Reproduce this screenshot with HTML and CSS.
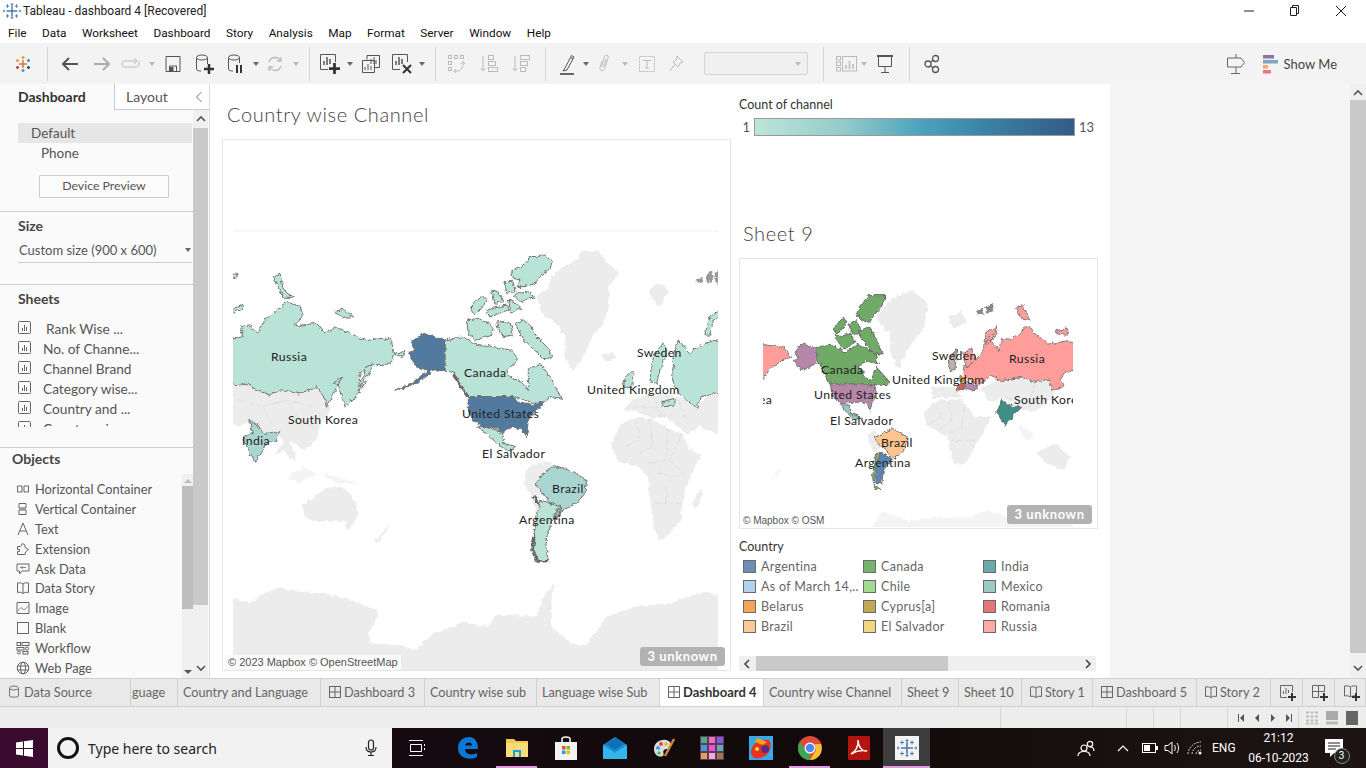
FILE: index.html
```html
<!DOCTYPE html>
<html lang="en">
<head>
  <meta charset="UTF-8" />
  <title>Tableau - dashboard 4 [Recovered]</title>
  <link rel="stylesheet" href="styles.css">
</head>
<body>
  <svg class="defs" width="0" height="0">
    <filter id="rough" x="-5%" y="-5%" width="110%" height="110%" color-interpolation-filters="sRGB"><feTurbulence type="fractalNoise" baseFrequency=".07" numOctaves="3" seed="4"/><feDisplacementMap in="SourceGraphic" scale="15" xChannelSelector="R" yChannelSelector="G"/></filter>
    <symbol id="i-sheet" viewBox="0 0 14 14"><rect x="0.5" y="0.5" width="12" height="12" rx="1" fill="none" stroke="#666"/><path d="M4.5 10V7M6.5 10V4M8.5 10V6" stroke="#666" fill="none"/></symbol>
    <symbol id="i-dash" viewBox="0 0 14 14"><rect x="1.5" y="1.5" width="11" height="11" fill="none" stroke="#666"/><path d="M7 1.5V12.5M1.5 7H12.5" stroke="#666" fill="none"/></symbol>
    <symbol id="i-story" viewBox="0 0 14 14"><path d="M7 3C5.5 1.8 3.5 1.6 1.5 2V11.5C3.5 11 5.5 11.3 7 12.5 8.5 11.3 10.5 11 12.5 11.5V2C10.5 1.6 8.5 1.8 7 3ZM7 3V12.5" fill="none" stroke="#666"/></symbol>
    <symbol id="i-tab" viewBox="0 0 20 20"><g fill="none" stroke="#4a7bb0"><path d="M10 4V16M4 10H16" stroke-width="1.6"/><path d="M5 2.500V6.500M3 4.500H7M15 2.500V6.500M13 4.500H17M5 13.500V17.500M3 15.500H7M15 13.500V17.500M13 15.500H17M10 1V4M8.500 2.500H11.500M10 16V19M8.500 17.500H11.500M1 8.500V11.500M-.5 10H2.500M19 8.500V11.500M17.500 10H20.500"/></g></symbol>
    <symbol id="i-plus" viewBox="0 0 8 8"><path d="M4 0V8M0 4H8" stroke="#333" stroke-width="2"/></symbol>
  </svg>

  <header class="titlebar">
    <svg class="app-logo" width="18" height="18"><use href="#i-tab"/></svg>
    <span class="app-title">Tableau - dashboard 4 [Recovered]</span>
    <div class="winbtns">
      <svg width="12" height="12" viewBox="0 0 12 12"><path d="M1 6H11" stroke="#222"/></svg>
      <svg width="12" height="12" viewBox="0 0 12 12"><path d="M3.500 2.500V.5H9.500V8.500H7.500M1.500 2.500H7.500V10.500H1.500Z" fill="none" stroke="#222"/></svg>
      <svg width="12" height="12" viewBox="0 0 12 12"><path d="M1 1L11 11M11 1L1 11" stroke="#222"/></svg>
    </div>
  </header>

  <nav class="menubar">
    <span>File</span><span>Data</span><span>Worksheet</span><span>Dashboard</span><span>Story</span><span>Analysis</span><span>Map</span><span>Format</span><span>Server</span><span>Window</span><span>Help</span>
  </nav>

  <div class="toolbar">
    <div class="tool t30"><svg width="18" height="18" viewBox="0 0 18 18"><g stroke-width="1.500" fill="none"><path d="M9 5V13M5 9H13" stroke="#d9793a"/><path d="M9 1V4M7.500 2.500H10.500" stroke="#e3a13a"/><path d="M9 14V17M7.500 15.500H10.500" stroke="#5b8fb0"/><path d="M3.500 4V7M2 5.500H5" stroke="#e8a04a"/><path d="M14.500 4V7M13 5.500H16" stroke="#66889e"/><path d="M3.500 11V14M2 12.500H5" stroke="#c73a45"/><path d="M14.500 11V14M13 12.500H16" stroke="#1f4f80"/></g></svg></div>
    <i class="sep first"></i>
    <div class="tool t32"><svg width="20" height="18" viewBox="0 0 20 18"><path d="M18 9H3M9 3L3 9L9 15" fill="none" stroke="#555" stroke-width="2"/></svg></div>
    <div class="tool t32 off"><svg width="20" height="18" viewBox="0 0 20 18"><path d="M2 9H17M11 3L17 9L11 15" fill="none" stroke="#aaa" stroke-width="2"/></svg></div>
    <div class="tool t26 off"><svg width="20" height="16" viewBox="0 0 20 16"><path d="M15 5H4C2 5 1 6.500 1 8S2 11 4 11H15C17 11 18 9.500 18 8V5M13 2L16 5L13 8" fill="none" stroke="#bbb"/></svg></div>
    <b class="caret w16 dim"></b>
    <div class="tool t26"><svg width="16" height="18" viewBox="0 0 16 18"><path d="M1 1.500H15V16.500H1ZM4.500 16.500V11H11.500V16.500" fill="none" stroke="#555"/><rect x="4.500" y="12" width="4" height="4" fill="#555"/></svg></div>
    <div class="tool t38"><svg width="20" height="22" viewBox="0 0 20 22"><ellipse cx="7" cy="4.500" rx="5.500" ry="2.500" fill="none" stroke="#555"/><path d="M1.500 4.500V16C1.500 17.500 3.500 18 6 18M12.500 4.500V11" fill="none" stroke="#555"/><use href="#i-plus" x="9" y="11" width="10" height="10"/></svg></div>
    <div class="tool t24"><svg width="18" height="22" viewBox="0 0 18 22"><ellipse cx="7" cy="4.500" rx="5.500" ry="2.500" fill="none" stroke="#555"/><path d="M1.500 4.500V16C1.500 17.500 3.500 18 6 18M12.500 4.500V10" fill="none" stroke="#555"/><path d="M10 12V20M14 12V20" stroke="#333" stroke-width="2"/></svg></div>
    <b class="caret w16"></b>
    <div class="tool t22 off"><svg width="18" height="18" viewBox="0 0 18 18"><path d="M3 7C4 4 6.500 2.500 9 2.500 11.500 2.500 13.500 3.500 15 6M15 11C14 14 11.500 15.500 9 15.500 6.500 15.500 4.500 14.500 3 12M15 2V6H11M3 16V12H7" fill="none" stroke="#bbb" stroke-width="1.300"/></svg></div>
    <b class="caret w20 dim"></b>
    <i class="sep s2"></i>
    <div class="tool t30"><svg width="22" height="22" viewBox="0 0 22 22"><path d="M9 16.500H1.500V1.500H16.500V9" fill="none" stroke="#555"/><path d="M5 12V8M8 12V4M11 11V6" stroke="#555" stroke-width="1.500"/><use href="#i-plus" x="10" y="10" width="11" height="11"/></svg></div>
    <b class="caret w10"></b>
    <div class="tool t32"><svg width="20" height="20" viewBox="0 0 20 20"><path d="M6 5.500V1.500H18.500V13.500H14" fill="none" stroke="#555"/><path d="M1.500 6.500H13.500V18.500H1.500Z" fill="#f3f3f3" stroke="#555"/><path d="M4 16V13M7 16V10M10 16V12M10 10V5M13 10V3M15 10V6" stroke="#555"/></svg></div>
    <div class="tool t30"><svg width="22" height="22" viewBox="0 0 22 22"><path d="M9 16.500H1.500V1.500H16.500V9" fill="none" stroke="#555"/><path d="M5 12V8M8 12V4M11 11V6" stroke="#555" stroke-width="1.500"/><path d="M12 12L20 20M20 12L12 20" stroke="#333" stroke-width="2"/></svg></div>
    <b class="caret w10"></b>
    <i class="sep s3"></i>
    <div class="tool t32 off"><svg width="20" height="20" viewBox="0 0 20 20"><g fill="none" stroke="#bbb"><rect x="1.500" y="1.500" width="3" height="3"/><rect x="7.500" y="1.500" width="3" height="3"/><rect x="13.500" y="1.500" width="3" height="3"/><rect x="1.500" y="7.500" width="3" height="3"/><rect x="1.500" y="13.500" width="3" height="3"/><path d="M7 17C12 18 17 15 16 8M14 10L16 7.500 18 10M7 17L9 15M7 17L9 19"/></g></svg></div>
    <div class="tool t32 off"><svg width="20" height="20" viewBox="0 0 20 20"><g fill="none" stroke="#bbb"><path d="M4 2V17M1.500 14L4 17 6.500 14"/><rect x="9.500" y="1.500" width="5" height="4"/><rect x="9.500" y="7.500" width="7" height="4"/><rect x="9.500" y="13.500" width="9" height="4"/></g></svg></div>
    <div class="tool t32 off"><svg width="20" height="20" viewBox="0 0 20 20"><g fill="none" stroke="#bbb"><path d="M4 2V17M1.500 14L4 17 6.500 14"/><rect x="9.500" y="1.500" width="9" height="4"/><rect x="9.500" y="7.500" width="7" height="4"/><rect x="9.500" y="13.500" width="5" height="4"/></g></svg></div>
    <i class="sep s3"></i>
    <div class="tool t28"><svg width="18" height="24" viewBox="0 0 18 24"><path d="M6 16L4 19 8 18 15 5 12.500 3.500ZM11.500 5.500L14 7" fill="none" stroke="#555"/><path d="M1 22H15" stroke="#444" stroke-width="1.600"/></svg></div>
    <b class="caret w8"></b>
    <div class="tool t30 off"><svg width="16" height="22" viewBox="0 0 16 22"><path d="M5 8L3 15C2.500 18 6.500 19 7.500 16L11 5C12 2 8.500 1 7.500 3.500L5 12C4.500 13.500 6.500 14 7 12.500L9 6" fill="none" stroke="#bbb"/></svg></div>
    <b class="caret w10 dim"></b>
    <div class="tool t34 off"><svg width="18" height="18" viewBox="0 0 18 18"><rect x="1.500" y="1.500" width="15" height="15" fill="none" stroke="#bbb" stroke-dasharray="2 1"/><path d="M5 5.500H13M9 5.500V13M7 13H11" fill="none" stroke="#bbb"/></svg></div>
    <div class="tool t26 off"><svg width="18" height="20" viewBox="0 0 18 20"><path d="M9 2L15 8 12 9 10 13 5 8 8.500 6ZM6.500 10.500L2 17" fill="none" stroke="#bbb"/></svg></div>
    <div class="fit-select"><b class="caret dim"></b></div>
    <i class="sep s4"></i>
    <div class="tool t28 off"><svg width="22" height="18" viewBox="0 0 22 18"><g fill="none" stroke="#bbb"><rect x=".5" y="1.500" width="4" height="3.500"/><rect x=".5" y="7" width="4" height="3.500"/><rect x=".5" y="12.500" width="4" height="3.500"/><rect x="6.500" y="1.500" width="14" height="14.500"/></g><path d="M10 14V10M13.500 14V6M17 14V9" stroke="#bbb" stroke-width="1.500"/></svg></div>
    <b class="caret w6 dim"></b>
    <div class="tool t36"><svg width="18" height="20" viewBox="0 0 18 20"><path d="M1 2H17" stroke="#555" stroke-width="2"/><path d="M2.500 3V12.500H15.500V3M9 12.500V18M5 18.500H13" fill="none" stroke="#555"/></svg></div>
    <i class="sep s5"></i>
    <div class="tool t44"><svg width="16" height="20" viewBox="0 0 16 20"><g fill="none" stroke="#555" stroke-width="1.300"><circle cx="11.500" cy="4.500" r="3"/><circle cx="4" cy="10" r="3"/><circle cx="11.500" cy="15.500" r="3"/><path d="M9 6.300L6.500 8.200M6.500 11.800L9 13.700"/></g></svg></div>
    <div class="tool-right">
      <svg width="20" height="22" viewBox="0 0 20 22"><path d="M10 1V5M10 14V20M5 20.500H14M1.500 5H15L18.500 9.500 15 14H1.500Z" fill="none" stroke="#666"/></svg>
      <div class="show-me">
        <svg width="16" height="20" viewBox="0 0 16 20"><rect y="1" width="11" height="3.500" fill="#8a74a0"/><rect y="6" width="15" height="3.500" fill="#7fa3c9"/><rect y="11" width="5" height="3.500" fill="#f2a868"/><rect y="16" width="8" height="3.500" fill="#ef7480"/></svg>
        <span>Show Me</span>
      </div>
    </div>
  </div>

  <main class="workspace">
    <aside class="sidebar">
      <div class="side-tabs">
        <div class="side-tab active">Dashboard</div>
        <div class="side-tab">Layout<svg class="collapse" width="8" height="12" viewBox="0 0 8 12"><path d="M6.500 1L1.500 6 6.500 11" fill="none" stroke="#777"/></svg></div>
      </div>
      <div class="side-body">
        <div class="side-content">
          <section class="sec device">
            <div class="dev-row selected">Default</div>
            <div class="dev-row phone">Phone</div>
            <div class="dev-btn">Device Preview</div>
          </section>
          <section class="sec size">
            <h3>Size</h3>
            <div class="size-select">Custom size (900 x 600)<b class="caret dark"></b></div>
          </section>
          <section class="sec sheets">
            <h3>Sheets</h3>
            <ul class="sheet-list">
              <li><svg width="14" height="14"><use href="#i-sheet"/></svg><span class="rank">Rank Wise ...</span></li>
              <li><svg width="14" height="14"><use href="#i-sheet"/></svg><span>No. of Channe...</span></li>
              <li><svg width="14" height="14"><use href="#i-sheet"/></svg><span>Channel Brand</span></li>
              <li><svg width="14" height="14"><use href="#i-sheet"/></svg><span>Category wise...</span></li>
              <li><svg width="14" height="14"><use href="#i-sheet"/></svg><span>Country and ...</span></li>
              <li><svg width="14" height="14"><use href="#i-sheet"/></svg><span>Country wise ...</span></li>
            </ul>
          </section>
          <section class="objects">
            <h3>Objects</h3>
            <div class="obj-wrap">
              <ul class="obj-list">
                <li><svg width="14" height="14" viewBox="0 0 14 14"><path d="M1.500 4H6V10H1.500ZM8 4H12.500V10H8Z" fill="none" stroke="#666"/></svg>Horizontal Container</li>
                <li><svg width="14" height="14" viewBox="0 0 14 14"><path d="M3 1.500H10V6H3ZM3 8H10V12.500H3Z" fill="none" stroke="#666"/><rect x="3" y="6" width="7" height="2" fill="#999"/></svg>Vertical Container</li>
                <li><svg width="14" height="14" viewBox="0 0 14 14"><path d="M2 13L7 1 12 13M4 9H10" fill="none" stroke="#666"/></svg>Text</li>
                <li><svg width="14" height="14" viewBox="0 0 14 14"><path d="M1.500 4.500H4.500L6.500 1.500 9 3V5.500L12.500 7.500 9.500 10 9 12.500H1.500V9.500H3.500V7.500H1.500Z" fill="none" stroke="#666"/></svg>Extension</li>
                <li><svg width="14" height="14" viewBox="0 0 14 14"><path d="M1 2H13V9H6L3.500 12V9H1Z" fill="none" stroke="#666"/><path d="M4 5.500H10M6 4V7" stroke="#888"/></svg>Ask Data</li>
                <li><svg width="14" height="14"><use href="#i-story"/></svg>Data Story</li>
                <li><svg width="14" height="14" viewBox="0 0 14 14"><path d="M1 1.500H13V12.500H1Z" fill="none" stroke="#666"/><path d="M1.500 10L5 6.500 8 9 12.500 5" fill="none" stroke="#888"/></svg>Image</li>
                <li><svg width="14" height="14" viewBox="0 0 14 14"><rect x="1.500" y="1.500" width="11" height="11" fill="none" stroke="#666"/></svg>Blank</li>
                <li><svg width="14" height="14" viewBox="0 0 14 14"><g fill="none" stroke="#666"><rect x="1" y="1.500" width="3.500" height="3"/><rect x="6" y="1.500" width="7" height="3"/><rect x="1" y="6.500" width="7" height="2.500"/><circle cx="11" cy="7.500" r="1.500"/><circle cx="3" cy="11.500" r="1.500"/><rect x="7" y="10.500" width="5" height="2.500"/></g></svg>Workflow</li>
                <li><svg width="14" height="14" viewBox="0 0 14 14"><g fill="none" stroke="#666"><circle cx="7" cy="7" r="5.800"/><ellipse cx="7" cy="7" rx="2.500" ry="5.800"/><path d="M1.500 5H12.500M1.500 9H12.500"/></g></svg>Web Page</li>
              </ul>
              <div class="obj-scroll"><b class="arr up"></b><div class="obj-thumb"></div><b class="arr down"></b></div>
            </div>
          </section>
        </div>
        <div class="vscroll side-scroll">
          <svg width="10" height="8" viewBox="0 0 10 8"><path d="M1 6L5 2 9 6" fill="none" stroke="#555" stroke-width="1.600"/></svg>
          <div class="vthumb side-thumb"></div>
          <svg class="to-end" width="10" height="8" viewBox="0 0 10 8"><path d="M1 2L5 6 9 2" fill="none" stroke="#555" stroke-width="1.600"/></svg>
        </div>
      </div>
    </aside>

    <div class="canvas">
      <div class="dashboard">
        <div class="col-left">
          <h2 class="sheet-title">Country wise Channel</h2>
          <div class="map-frame map-big">
            <svg class="map" width="507" height="530" viewBox="223 140 507 530">
              <defs><clipPath id="clip-big"><rect x="233" y="232" width="485" height="438"/></clipPath></defs>
              <path class="grid-line" d="M233 231H718"/>
              <g clip-path="url(#clip-big)">
                <g transform="translate(220 220) scale(.3333)">
                  <g filter="url(#rough)">
                  <g class="land">
                    <path d="M950 232L985 205 1000 165 1040 135 1070 125 1085 95 1130 92 1165 135 1195 160 1165 200 1165 260 1150 310 1120 345 1095 395 1060 450 1035 410 1035 345 1000 300 975 290Z"/>
                    <path d="M1290 205L1320 190 1345 210 1320 260 1295 230Z"/>
                    <path d="M1150 405L1180 398 1188 412 1160 422Z"/>
                    <path d="M1210 570L1240 540 1300 520 1370 530 1410 545 1435 565 1460 530 1510 520 1510 650 1440 620 1400 640 1340 590 1290 590 1250 570Z"/>
                    <path d="M1175 670L1205 610 1250 595 1300 600 1340 625 1385 640 1410 690 1440 705 1415 760 1395 800 1385 860 1380 900 1340 950 1315 960 1300 900 1295 850 1285 770 1250 735 1195 725Z"/>
                    <path d="M1440 810L1450 820 1425 865 1420 850Z"/>
                    <path d="M25 495L75 490 120 515 150 525 190 510 240 520 290 500 320 540 330 575 300 610 290 660 250 690 215 660 195 680 180 640 135 640 85 600 60 620 25 600Z"/>
                    <path d="M165 700L200 660 225 700 220 720 190 690Z"/>
                    <path class="faint" d="M200 770L250 740 290 760 240 790Z"/>
                    <path class="faint" d="M300 760L350 770 420 790 350 790Z"/>
                    <path d="M250 855L290 825 335 800 380 810 408 850 410 890 385 930 375 905 330 900 285 905 255 890Z"/>
                    <path d="M465 965L505 920 500 935 470 970Z"/>
                    <path d="M920 750L940 735 985 725 1000 745 960 770 945 790 960 815 965 860 955 890 935 830 915 790Z"/>
                    <path class="inner" d="M1250 600L1260 660 1210 680M1290 600L1300 680 1260 700M1340 625L1340 720 1285 730M1385 640L1350 720 1395 770M1310 760L1380 770M1300 850L1380 850M1340 850L1340 790"/>
                    <path class="inner" d="M50 540L130 560 200 540 280 560M130 560L160 620M200 540L240 600 280 620M1240 560L1300 560 1340 590M1300 530L1320 590M1370 530L1400 600"/>
                  </g>
                  <g class="teal">
                    <path d="M25 360L70 350 62 320 85 315 110 340 135 300 170 270 205 245 240 260 250 290 220 318 290 310 315 340 345 320 400 345 440 362 480 355 515 360 520 400 555 395 545 412 520 405 510 432 450 435 420 462 415 515 440 482 400 540 375 560 365 530 355 495 340 490 365 470 320 565 318 540 290 500 240 522 190 510 150 525 120 515 75 490 25 497Z"/>
                    <path d="M160 168L180 160 190 210 222 232 190 232Z"/>
                    <path d="M25 272L70 255 62 268 25 290Z"/>
                    <path d="M340 275L370 268 400 290 370 292Z"/>
                    <path d="M25 155L55 165 25 185Z"/>
                    <path d="M418 505L440 440 460 430 435 480Z"/>
                    <path d="M675 360L730 350 760 372 790 375 830 382 870 390 895 420 860 450 870 470 910 490 925 512 925 450 960 430 990 470 1025 535 990 530 980 545 940 550 900 535 880 530 745 530 700 455 675 450Z"/>
                    <path d="M875 155L910 135 930 110 975 108 998 125 990 145 965 165 945 190 915 200 890 200 900 180 880 175Z"/>
                    <path d="M855 185L880 185 885 215 860 220Z"/>
                    <path d="M880 225L925 215 945 230 900 245Z"/>
                    <path d="M885 310L910 300 935 320 950 350 985 385 995 410 975 420 955 400 920 370 900 340Z"/>
                    <path d="M740 300L775 295 820 320 815 345 770 360 745 340Z"/>
                    <path d="M750 265L785 225 800 240 785 265 765 285Z"/>
                    <path d="M800 270L860 255 865 270 810 290Z"/>
                    <path d="M830 305L870 305 880 345 850 350 835 330Z"/>
                    <path d="M815 210L835 215 850 245 825 250Z"/>
                    <path d="M865 240L890 250 905 265 875 280Z"/>
                    <path d="M770 620L790 620 830 630 850 645 850 670 890 680 860 692 830 670 800 640Z"/>
                    <path class="mid" d="M945 790L960 770 1000 740 1040 745 1100 780 1095 820 1070 850 1030 870 1010 900 990 850 960 810Z"/>
                    <path d="M960 860L990 850 1020 880 1010 900 1025 860 1000 900 960 900Z"/>
                    <path class="mid" d="M85 600L110 610 130 640 180 635 170 660 140 670 105 725 75 670 70 650 100 640Z"/>
                    <path d="M1290 485L1295 420 1330 365 1340 400 1320 450 1310 490Z"/>
                    <path d="M1360 440L1362 395 1375 360 1410 400 1440 375 1510 355 1510 515 1440 530 1432 568 1400 540 1370 510 1355 470Z"/>
                    <path d="M1455 345L1470 290 1510 265 1510 282 1480 300 1470 345Z"/>
                    <path d="M1215 475L1240 450 1235 502 1210 502Z"/>
                    <path d="M1325 545L1365 535 1365 558 1330 560Z"/>
                    <path class="speck" d="M1430 180L1445 172 1450 186 1432 190ZM1458 175L1475 150 1480 172 1465 192ZM1485 160L1496 150 1500 185 1488 190Z"/>
                    <path class="ink" d="M700 465L745 530M965 860L940 830"/>
                  </g>
                  <g class="dark">
                    <path d="M675 360L610 340 575 365 585 390 565 400 590 440 625 450 575 490 525 510 590 490 640 450 675 450Z"/>
                    <path d="M745 530L880 530 900 550 940 555 975 545 950 570 925 600 920 650 905 625 860 625 850 640 830 625 790 620 760 605 745 570Z"/>
                  </g>
                  <g transform="translate(0 840)">
                    <g class="teal"><path d="M960 0L1020 20 1000 50 985 100 975 130 985 180 950 187 935 150 945 80 955 30Z"/><path class="ink" d="M945 100L938 150 955 185 985 183"/></g>
                    <path class="land-sheet" d="M25 290L90 310 130 280 180 265 240 275 300 280 380 295 470 330 475 350 445 400 450 430 530 435 590 450 640 400 730 365 800 380 830 345 880 345 950 350 975 280 1005 250 995 290 995 380 1050 430 1100 435 1160 350 1240 320 1350 310 1420 285 1460 275 1510 290 1510 530 25 530Z"/>
                  </g>
                  </g>
                </g>
                <text class="map-label" x="271" y="361">Russia</text>
                <text class="map-label" x="464" y="377">Canada</text>
                <text class="map-label" x="462" y="418">United States</text>
                <text class="map-label" x="288" y="424">South Korea</text>
                <text class="map-label" x="242" y="445">India</text>
                <text class="map-label" x="482" y="458">El Salvador</text>
                <text class="map-label" x="552" y="493">Brazil</text>
                <text class="map-label" x="519" y="524">Argentina</text>
                <text class="map-label" x="637" y="357">Sweden</text>
                <text class="map-label" x="587" y="394">United Kingdom</text>
              </g>
            </svg>
            <div class="attrib">© 2023 Mapbox © OpenStreetMap</div>
            <div class="unknown">3 unknown</div>
          </div>
        </div>
        <div class="col-right">
          <div class="color-legend">
            <div class="legend-title">Count of channel</div>
            <div class="ramp-row"><span class="ramp-min">1</span><div class="ramp"></div><span>13</span></div>
          </div>
          <h2 class="sheet-title small">Sheet 9</h2>
          <div class="map-frame map-small">
            <svg class="map" width="357" height="269" viewBox="740 260 357 269">
              <defs><clipPath id="clip-small"><rect x="763" y="262" width="310" height="266"/></clipPath></defs>
              <g clip-path="url(#clip-small)">
                <g transform="translate(735 255) scale(.3333)">
                  <g filter="url(#rough)">
                  <g class="land">
                    <path d="M425 190L470 135 530 110 580 150 560 230 520 280 490 340 470 300 465 240Z"/>
                    <path d="M570 470L610 440 680 440 720 490 765 490 730 560 690 630 655 625 640 550 575 510Z"/>
                    <path d="M905 600L960 570 1005 610 985 650 930 625Z"/>
                    <path d="M740 400L800 380 860 370 945 380 960 420 905 470 880 470 850 460 810 430 760 440Z"/>
                    <path d="M590 400L660 400 680 430 590 430Z"/>
                    <path d="M640 190L680 175 690 205 660 225Z"/>
                    <path d="M400 540L420 530 430 570 425 600 405 570Z"/>
                    <path class="faint" d="M850 510L900 540 880 560 860 545Z"/>
                    <path class="faint" d="M110 670L140 635 130 660 115 672Z"/>
                    <path class="faint" d="M400 840L440 770 520 800 600 790 700 790 760 770 830 790 1030 790 1030 850Z"/>
                    <path class="inner" d="M600 445L620 490 580 510M640 440L650 500 620 520M690 450L680 520 640 540M650 560L720 560M810 430L870 440M900 390L880 460"/>
                  </g>
                  <g class="pink">
                    <path d="M685 340L720 320 745 290 750 240 785 215 770 260 790 290 800 255 830 255 880 215 900 240 945 270 1000 260 1030 265 1030 350 990 355 975 375 985 395 950 412 945 375 900 385 860 370 800 380 770 365 730 395 690 370Z"/>
                    <path d="M70 270L145 280 170 310 140 320 105 345 70 395Z"/>
                    <path d="M845 160L865 155 885 200 860 195Z"/>
                    <path d="M750 265L790 222 785 240 755 272Z"/>
                    <path d="M960 230L995 225 1000 240 970 240Z"/>
                    <path d="M685 300L710 280 720 320 695 345Z"/>
                  </g>
                  <path class="cinder" d="M725 172L740 165 745 178 730 180ZM750 162L775 148 772 172 755 175Z"/>
                  <g class="green">
                    <path d="M245 285L290 270 330 295 370 270 420 300 430 330 395 320 370 335 405 385 425 340 465 385 455 395 385 390 285 390 245 310Z"/>
                    <path d="M365 175L400 125 450 125 445 150 425 175 400 205 375 195Z"/>
                    <path d="M295 225L325 190 335 205 305 245Z"/>
                    <path d="M340 210L365 200 385 240 350 240Z"/>
                    <path d="M300 250L345 240 360 265 325 285Z"/>
                    <path d="M370 230L405 220 445 300 420 300 385 265Z"/>
                  </g>
                  <g class="plum">
                    <path d="M245 280L200 270 180 295 190 315 175 320 200 350 245 330Z"/>
                    <path d="M285 390L390 390 420 395 415 430 405 470 395 445 345 445 320 450 295 430Z"/>
                    <path d="M690 385L730 395 720 410 690 402Z"/>
                  </g>
                  <path class="mexico" d="M315 450L345 455 350 480 380 490 355 495 335 475Z"/>
                  <path class="brazil" d="M420 550L470 525 520 550 505 590 470 620 460 595 430 570Z"/>
                  <path class="argentina" d="M435 595L470 615 445 650 440 690 420 685 425 640Z"/>
                  <path class="chile" d="M425 600L435 595 420 660 415 690 442 710 420 705 412 670Z"/>
                  <path class="india" d="M800 435L820 455 860 460 840 480 810 515 785 475Z"/>
                  <path class="sweden" d="M645 350L640 320 665 285 660 345Z"/>
                  <path class="romania" d="M665 395L690 395 685 408 665 408Z"/>
                  <path class="belarus" d="M675 365L695 370 690 385 675 382Z"/>
                  </g>
                </g>
                <text class="map-label" x="821" y="375">Canada</text>
                <text class="map-label" x="1009" y="364">Russia</text>
                <text class="map-label" x="932" y="361">Sweden</text>
                <text class="map-label" x="892" y="385">United Kingdom</text>
                <text class="map-label" x="814" y="400">United States</text>
                <text class="map-label" x="1014" y="405">South Korea</text>
                <text class="map-label" x="702" y="405">South Korea</text>
                <text class="map-label" x="830" y="426">El Salvador</text>
                <text class="map-label" x="881" y="448">Brazil</text>
                <text class="map-label" x="855" y="468">Argentina</text>
              </g>
            </svg>
            <div class="attrib short">© Mapbox © OSM</div>
            <div class="unknown">3 unknown</div>
          </div>
          <div class="legend-title country">Country</div>
          <div class="country-grid">
            <div class="lg"><i class="sw s-arg"></i>Argentina</div>
            <div class="lg"><i class="sw s-can"></i>Canada</div>
            <div class="lg"><i class="sw s-ind"></i>India</div>
            <div class="lg"><i class="sw s-mar"></i>As of March 14,..</div>
            <div class="lg"><i class="sw s-chi"></i>Chile</div>
            <div class="lg"><i class="sw s-mex"></i>Mexico</div>
            <div class="lg"><i class="sw s-bel"></i>Belarus</div>
            <div class="lg"><i class="sw s-cyp"></i>Cyprus[a]</div>
            <div class="lg"><i class="sw s-rom"></i>Romania</div>
            <div class="lg"><i class="sw s-bra"></i>Brazil</div>
            <div class="lg"><i class="sw s-els"></i>El Salvador</div>
            <div class="lg"><i class="sw s-rus"></i>Russia</div>
          </div>
          <div class="hscroll">
            <svg width="8" height="10" viewBox="0 0 8 10"><path d="M6 1L2 5 6 9" fill="none" stroke="#444" stroke-width="1.600"/></svg>
            <div class="hthumb"></div>
            <svg width="8" height="10" viewBox="0 0 8 10"><path d="M2 1L6 5 2 9" fill="none" stroke="#444" stroke-width="1.600"/></svg>
          </div>
        </div>
      </div>
    </div>

    <div class="vscroll main-scroll">
      <svg width="10" height="8" viewBox="0 0 10 8"><path d="M1 6L5 2 9 6" fill="none" stroke="#555" stroke-width="1.600"/></svg>
      <div class="vthumb main-thumb"></div>
      <svg class="to-end" width="10" height="8" viewBox="0 0 10 8"><path d="M1 2L5 6 9 2" fill="none" stroke="#555" stroke-width="1.600"/></svg>
    </div>
  </main>

  <div class="tabs">
    <div class="tab ds"><svg width="12" height="14" viewBox="0 0 12 14"><ellipse cx="6" cy="3" rx="4.500" ry="2" fill="none" stroke="#777"/><path d="M1.500 3V11C1.500 12.500 10.500 12.500 10.500 11V3" fill="none" stroke="#777"/></svg>Data Source</div>
    <div class="tab clipped">guage</div>
    <div class="tab">Country and Language</div>
    <div class="tab has-icon"><svg width="14" height="14"><use href="#i-dash"/></svg>Dashboard 3</div>
    <div class="tab">Country wise sub</div>
    <div class="tab">Language wise Sub</div>
    <div class="tab has-icon current"><svg width="14" height="14"><use href="#i-dash"/></svg>Dashboard 4</div>
    <div class="tab">Country wise Channel</div>
    <div class="tab">Sheet 9</div>
    <div class="tab">Sheet 10</div>
    <div class="tab has-icon"><svg width="14" height="14"><use href="#i-story"/></svg>Story 1</div>
    <div class="tab has-icon"><svg width="14" height="14"><use href="#i-dash"/></svg>Dashboard 5</div>
    <div class="tab has-icon"><svg width="14" height="14"><use href="#i-story"/></svg>Story 2</div>
    <div class="tab icon"><svg width="18" height="18" viewBox="0 0 18 18"><path d="M8 13.500H1.500V1.500H13.500V8" fill="none" stroke="#666"/><path d="M4.500 10V7M7 10V4M9.500 9V6" stroke="#666"/><use href="#i-plus" x="9" y="9" width="8" height="8"/></svg></div>
    <div class="tab icon"><svg width="18" height="18" viewBox="0 0 18 18"><path d="M8 13.500H1.500V1.500H13.500V8M7.500 1.500V13.500M1.500 7.500H13.500" fill="none" stroke="#666"/><use href="#i-plus" x="9" y="9" width="8" height="8"/></svg></div>
    <div class="tab icon"><svg width="18" height="18" viewBox="0 0 18 18"><path d="M7.500 3C6 1.800 3.500 1.600 1.500 2V12C3.500 11.500 6 11.800 7.500 13 9 11.800 11 11.500 13.500 12V2C11 1.600 9 1.800 7.500 3ZM7.500 3V13" fill="none" stroke="#666"/><use href="#i-plus" x="9" y="9" width="8" height="8"/></svg></div>
  </div>

  <div class="statusbar">
    <i class="st-cell c1"></i><i class="st-cell c2"></i><i class="st-cell c3"></i><i class="st-cell c4"></i>
    <div class="st-nav">
      <svg width="8" height="10" viewBox="0 0 8 10"><path d="M1.500 1V9" stroke="#555"/><path d="M7 1V9L3 5Z" fill="#555"/></svg>
      <svg width="8" height="10" viewBox="0 0 8 10"><path d="M6 1V9L2 5Z" fill="#555"/></svg>
      <svg width="8" height="10" viewBox="0 0 8 10"><path d="M2 1V9L6 5Z" fill="#555"/></svg>
      <svg width="8" height="10" viewBox="0 0 8 10"><path d="M1 1V9L5 5Z" fill="#555"/><path d="M6.500 1V9" stroke="#555"/></svg>
    </div>
    <div class="st-views">
      <svg width="12" height="14" viewBox="0 0 12 14"><path d="M0 1.500H12M0 5.500H12M0 9.500H12M0 12.500H12" stroke="#bbb" stroke-width="2" stroke-dasharray="3 1.500"/></svg>
      <svg width="12" height="14" viewBox="0 0 12 14"><rect width="12" height="9" fill="#aaa"/><rect y="10.500" width="12" height="3" fill="#bbb"/></svg>
      <svg width="12" height="14" viewBox="0 0 12 14"><rect width="12" height="14" fill="#666"/></svg>
    </div>
  </div>

  <footer class="taskbar">
    <div class="start"><svg width="17" height="17" viewBox="0 0 17 17"><path d="M0 2.500L7 1.500V8H0ZM8 1.300L17 0V8H8ZM0 9H7V15.500L0 14.500ZM8 9H17V17L8 15.700Z" fill="#fff"/></svg></div>
    <div class="search">
      <span class="cortana"></span>
      <span class="search-text">Type here to search</span>
      <svg class="mic" width="12" height="18" viewBox="0 0 12 18"><rect x="3.500" y="1" width="5" height="10" rx="2.500" fill="none" stroke="#222" stroke-width="1.200"/><path d="M1 8C1 11.500 3 13 6 13S11 11.500 11 8M6 13V16M3 16.500H9" fill="none" stroke="#222" stroke-width="1.200"/></svg>
    </div>
    <div class="task-icons">
      <div class="task ti-view"><svg width="16" height="16" viewBox="0 0 16 16"><path d="M0 .5H14M0 15.500H14M1.500 4.500H12.500V11.500H1.500Z" fill="none" stroke="#fff"/><path d="M15.500 4V6M15.500 8V10" stroke="#fff"/></svg></div>
      <div class="task ti-edge"><svg width="22" height="24" viewBox="0 0 22 24"><path d="M1 12C1 5 6 1 12 1 18 1 21 6 21 13H8C8 18 14 20 20 17V21C12 25 1 22 1 12ZM8 9.500H15C15 5.500 9 5.500 8 9.500Z" fill="#0a78d7"/></svg></div>
      <div class="task ti-folder"><svg width="22" height="20" viewBox="0 0 22 20"><path d="M0 1H8L10 3H22V19H0Z" fill="#f5c84c"/><path d="M0 5H22V19H0Z" fill="#fbdc7a"/><path d="M7 19V12H15V19H13V14H9V19Z" fill="#1d9ed8"/></svg></div>
      <div class="task ti-store"><svg width="22" height="24" viewBox="0 0 22 24"><path d="M7 7V3C7 1.500 8 1 11 1S15 1.500 15 3V7" fill="none" stroke="#fff" stroke-width="1.500"/><rect y="6" width="22" height="18" fill="#f2f2f2"/><rect x="7" y="10" width="3.500" height="3.500" fill="#e74c2b"/><rect x="11.500" y="10" width="3.500" height="3.500" fill="#7fba2a"/><rect x="7" y="14.500" width="3.500" height="3.500" fill="#1e9de0"/><rect x="11.500" y="14.500" width="3.500" height="3.500" fill="#f5b800"/></svg></div>
      <div class="task ti-mail"><svg width="24" height="24" viewBox="0 0 24 24"><path d="M0 9L12 1 24 9V23H0Z" fill="#1a8fd8"/><path d="M0 9L12 17 24 9V23H0Z" fill="#34b6ea"/><path d="M3 8L12 2 21 8 12 14Z" fill="#0f6fb8"/></svg></div>
      <div class="task ti-paint"><svg width="24" height="24" viewBox="0 0 24 24"><path d="M2 13C2 7 8 3 14 4 19 5 20 9 18 12 16 14 14 12 12 14 10 16 13 18 11 20 7 22 2 19 2 13Z" fill="#d8e0e6"/><circle cx="9" cy="8" r="2" fill="#e64a3a"/><circle cx="14" cy="8" r="2" fill="#f2b632"/><circle cx="6" cy="12" r="2" fill="#3aa0e0"/><circle cx="7" cy="17" r="1.800" fill="#62b84a"/><path d="M22 3L13 20" stroke="#c98a3a" stroke-width="2.500"/></svg></div>
      <div class="task ti-grid"><svg width="24" height="24" viewBox="0 0 24 24"><rect width="24" height="24" fill="#5a3a6a"/><rect x="1" y="1" width="6" height="6" fill="#4caf7a"/><rect x="9" y="1" width="6" height="6" fill="#ef6fb0"/><rect x="17" y="1" width="6" height="6" fill="#8a5ad0"/><rect x="1" y="9" width="6" height="6" fill="#4a9ad0"/><rect x="9" y="9" width="6" height="6" fill="#ff4fc0"/><rect x="17" y="9" width="6" height="6" fill="#58b0a8"/><rect x="1" y="17" width="6" height="6" fill="#e8a040"/><rect x="9" y="17" width="6" height="6" fill="#f7a8d0"/><rect x="17" y="17" width="6" height="6" fill="#a07840"/></svg></div>
      <div class="task ti-candy"><svg width="24" height="24" viewBox="0 0 24 24"><rect width="24" height="24" fill="#38a8e8"/><path d="M2 16C2 8 10 3 20 4 23 8 22 18 14 21 8 24 2 22 2 16Z" fill="#e8341f"/><path d="M8 2L18 6 14 9 6 6Z" fill="#f9a11b"/><circle cx="16" cy="13" r="4" fill="#5a2d82"/><circle cx="8" cy="13" r="2" fill="#ffd43a"/></svg></div>
      <div class="task ti-chrome"><svg width="24" height="24" viewBox="0 0 24 24"><circle cx="12" cy="12" r="12" fill="#df4a3a"/><path d="M12 24C5 24 0 18.500 0 12 0 9 1 7 2 5.500L8 16 12 17Z" fill="#3aa757"/><path d="M12 24L18 14 17 8H23C24 11 24.500 17 20 21 18 23 15 24 12 24Z" fill="#fbc02d"/><circle cx="12" cy="12" r="5.500" fill="#fff"/><circle cx="12" cy="12" r="4.300" fill="#4a8af4"/></svg></div>
      <div class="task ti-pdf"><svg width="22" height="24" viewBox="0 0 22 24"><rect width="22" height="24" rx="1" fill="#b3140f"/><path d="M3 18C7 16 11 10 10 4 10 10 14 16 19 15 14 14 8 15 3 18Z" fill="none" stroke="#fff" stroke-width="1.500"/></svg></div>
      <div class="task ti-tableau"><span class="tb-tile"><svg width="20" height="20"><use href="#i-tab"/></svg></span></div>
    </div>
    <div class="tray">
      <svg class="tr-people" width="18" height="18" viewBox="0 0 18 18"><g fill="none" stroke="#fff" stroke-width="1.200"><circle cx="7" cy="9" r="3"/><path d="M1 17C1 14 3 12.500 7 12.500S13 14 13 17"/><circle cx="13" cy="5" r="2.700"/><path d="M13 8C15.500 8 17 9.500 17 12"/></g></svg>
      <svg class="tr-caret" width="12" height="8" viewBox="0 0 12 8"><path d="M1 7L6 2 11 7" fill="none" stroke="#fff" stroke-width="1.200"/></svg>
      <svg class="tr-batt" width="16" height="10" viewBox="0 0 16 10"><rect x=".5" y=".5" width="13" height="9" fill="none" stroke="#fff"/><rect x="2" y="2" width="6" height="6" fill="#fff"/><rect x="14" y="3" width="2" height="4" fill="#fff"/></svg>
      <svg class="tr-sound" width="17" height="16" viewBox="0 0 17 16"><path d="M1 5.500H4L8 2V14L4 10.500H1Z" fill="none" stroke="#fff"/><path d="M10.500 5C11.500 7 11.500 9 10.500 11M13 3C15 6 15 10 13 13" fill="none" stroke="#fff"/></svg>
      <svg class="tr-wifi" width="16" height="16" viewBox="0 0 16 16"><path d="M1 14C1 8 7 2 14 2M5 14C5 10 9 6 14 6M9 14C9 12 11 10 14 10" fill="none" stroke="#ccc" stroke-dasharray="2 1"/><circle cx="13" cy="13" r="1.500" fill="#fff"/></svg>
      <span class="eng">ENG</span>
      <div class="clock"><div>21:12</div><div>06-10-2023</div></div>
      <div class="notify"><svg width="20" height="20" viewBox="0 0 20 20"><path d="M1 1H19V15H10L6 19V15H1Z" fill="#fff"/><path d="M4 5H16M4 8H16M4 11H12" stroke="#222"/></svg><span class="badge">3</span></div>
    </div>
  </footer>
</body>
</html>
```

FILE: styles.css
```css
* { box-sizing: border-box; }
html, body { margin: 0; padding: 0; }
body { width: 1366px; height: 768px; overflow: hidden; display: flex; flex-direction: column; background: #fff; font-family: Lato, "Open Sans", sans-serif; color: #555; }
ul { list-style: none; margin: 0; padding: 0; }
h2, h3 { margin: 0; font-weight: normal; }
.defs { position: absolute; }

.titlebar { height: 22px; flex: none; display: flex; align-items: center; padding-left: 3px; }
.app-logo { margin-right: 2px; }
.app-title { font: 12px Roboto, sans-serif; color: #222; }
.winbtns { margin-left: auto; display: flex; align-items: center; gap: 34px; padding-right: 19px; }

.menubar { height: 21px; flex: none; display: flex; align-items: center; gap: 15.500px; padding-left: 8px; font: 11.800px Roboto, sans-serif; color: #111; }

.toolbar { height: 41px; flex: none; display: flex; align-items: center; padding: 0 29px 0 8px; background: #f3f3f3; }
.tool { flex: none; display: flex; align-items: center; justify-content: center; }
.t22 { width: 22px; } .t24 { width: 24px; } .t26 { width: 26px; } .t28 { width: 28px; } .t30 { width: 30px; }
.t32 { width: 32px; } .t34 { width: 34px; } .t36 { width: 36px; } .t38 { width: 38px; } .t44 { width: 44px; }
.sep { flex: none; width: 1px; height: 34px; background: #d6d6d6; }
.sep.first { margin: 0 6px 0 9px; }
.sep.s2 { margin: 0 5px 0 3px; }
.sep.s3 { margin: 0 5px 0 8px; }
.sep.s3 + .t28 { margin-left: 3px; }
.sep.s4 { margin: 0 9px 0 15px; }
.sep.s5 { margin-left: 6px; }
.caret { flex: none; display: flex; justify-content: center; align-items: center; }
.caret::after { content: ""; border: 3.5px solid transparent; border-top: 4px solid #666; border-bottom: 0; }
.caret.dim::after { border-top-color: #bbb; }
.w6 { width: 6px; } .w8 { width: 8px; } .w10 { width: 10px; } .w16 { width: 16px; } .w20 { width: 20px; }
.fit-select { flex: none; width: 104px; height: 23px; margin-left: 14px; display: flex; justify-content: flex-end; align-items: center; padding-right: 5px; border: 1px solid #d4d4d4; border-radius: 2px; background: #f0f0f0; }
.fit-select .caret { width: 8px; }
.tool-right { margin-left: auto; display: flex; align-items: center; }
.show-me { display: flex; align-items: center; margin-left: 17px; gap: 5px; font-size: 13px; color: #444; }

.workspace { height: 594px; flex: none; display: flex; }

.sidebar { width: 210px; flex: none; display: flex; flex-direction: column; background: #fafafa; border-right: 1px solid #dcdcdc; }
.side-tabs { height: 26px; flex: none; display: flex; }
.side-tab { font-size: 14px; line-height: 26px; }
.side-tab.active { width: 114px; padding-left: 18px; font-weight: bold; color: #333; }
.side-tab + .side-tab { flex: 1; padding-left: 11px; position: relative; border-left: 1px solid #ccc; border-bottom: 1px solid #ccc; background: #fff; }
.collapse { position: absolute; right: 6px; top: 7px; }
.side-body { flex: 1; display: flex; min-height: 0; }
.side-content { width: 193px; flex: none; display: flex; flex-direction: column; }
.sec { border-bottom: 1px solid #ccc; flex: none; }
.sec h3, .objects h3 { font-size: 14px; font-weight: bold; color: #444; }
.device { height: 102px; padding: 13px 1px 0 18px; font-size: 13.500px; }
.dev-row { height: 20px; line-height: 20px; color: #555; }
.dev-row.selected { background: #e6e6e6; padding-left: 13px; }
.dev-row.phone { padding-left: 23px; }
.dev-btn { width: 130px; height: 23px; margin: 12px 0 0 21px; border: 1px solid #ccc; border-radius: 1px; text-align: center; font-size: 12.300px; line-height: 20px; color: #555; background: #fbfbfb; }
.size { height: 73px; padding: 5px 1px 0 18px; }
.size h3 { line-height: 17px; }
.size-select { position: relative; height: 22px; margin-top: 7px; padding-left: 1px; font-size: 13px; line-height: 18px; border-bottom: 1px solid #ccc; }
.size-select .caret { position: absolute; right: 0; top: 7px; width: 8px; }
.sheets { height: 163px; padding: 5px 0 0 18px; }
.sheets h3 { line-height: 17px; }
.sheet-list { margin-top: 11px; height: 109px; overflow: hidden; font-size: 13.700px; }
.sheet-list li { height: 20px; display: flex; align-items: center; gap: 11px; color: #555; white-space: nowrap; }
.sheet-list .rank { margin-left: 3px; }
.objects { flex: 1; min-height: 0; padding: 2px 0 0 12px; }
.objects h3 { line-height: 17px; }
.obj-wrap { display: flex; height: 199px; margin-top: 12px; }
.obj-list { width: 176px; margin-left: -8px; padding-left: 12px; font-size: 12.800px; overflow: hidden; }
.obj-list li { height: 19.900px; display: flex; align-items: center; gap: 5px; white-space: nowrap; color: #555; margin-left: -4px; }
.obj-list svg { margin-left: 4px; flex: none; }
.obj-scroll { width: 11px; margin: -5px 0 0 2px; background: #f0f0f0; display: flex; flex-direction: column; align-items: center; }
.arr { flex: none; height: 12px; margin-top: 3px; }
.arr.up { border: 4px solid transparent; border-bottom: 4px solid #bbb; border-top: 0; height: 4px; margin: 5px 0 3px; }
.arr.down { border: 4px solid transparent; border-top: 4px solid #555; border-bottom: 0; height: 4px; margin: auto 0 4px; }
.obj-thumb { width: 11px; height: 123px; background: #bdbdbd; }

.vscroll { flex: none; display: flex; flex-direction: column; align-items: center; background: #f0f0f0; }
.vscroll > svg { margin-top: 5px; flex: none; }
.vscroll .to-end { margin-top: auto; margin-bottom: 6px; }
.vthumb { width: 100%; margin-top: 3px; background: #c9c9c9; }
.side-scroll { width: 15px; }
.side-thumb { height: 477px; margin-top: 5px; }
.main-scroll { width: 16px; }
.main-thumb { height: 553px; }

.canvas { flex: 1; min-width: 0; background: #f5f5f5; }
.dashboard { width: 900px; height: 100%; background: #fff; display: flex; }
.col-left { width: 521px; flex: none; padding-left: 12px; }
.col-right { width: 379px; flex: none; padding: 13px 0 0 8px; }
.sheet-title { font-size: 20px; font-weight: 300; letter-spacing: .6px; color: #444; line-height: 24px; padding: 18px 0 0 5px; height: 55px; }
.sheet-title.small { padding: 0 0 0 4px; height: 25px; margin-top: 85px; }
.map-frame { position: relative; border: 1px solid #e6e6e6; background: #fff; }
.map-big { width: 509px; height: 532px; }
.map-small { width: 359px; height: 271px; margin-top: 12px; }
.map { display: block; }
.grid-line { stroke: #efefef; fill: none; }
.land path { fill: #ececec; stroke: #e5e5e5; stroke-width: 2; }
.land path.faint { fill: #f4f4f4; stroke: none; }
.land path.inner { fill: none; stroke: #d9d9d9; stroke-width: 2; }
.land-sheet { fill: #ececec; }
.teal path { fill: #bae3d7; stroke: #727272; stroke-width: 3; stroke-linejoin: round; }
.teal path.mid { fill: #aad6d1; }
.teal path.speck { fill: #999; stroke: #888; stroke-width: 2; }
.teal path.ink { fill: none; stroke: #666; stroke-width: 7; }
.dark path { fill: #527a9f; stroke: #707070; stroke-width: 3; stroke-linejoin: round; }
.pink path { fill: #ff9d9a; stroke: #777; stroke-width: 3; }
.green path { fill: #71a966; stroke: #666; stroke-width: 3; }
.plum path { fill: #b687a9; stroke: #777; stroke-width: 3; }
.cinder { fill: #888; stroke: #777; stroke-width: 2; }
.mexico, .brazil, .argentina, .chile, .india, .sweden, .romania, .belarus { stroke: #707070; stroke-width: 3; }
.mexico { fill: #94c7bf; } .brazil { fill: #fcc48f; } .argentina { fill: #5c85b0; } .chile { fill: #84b56f; }
.india { fill: #3f8f86; } .sweden { fill: #bab0ac; } .romania { fill: #e15759; } .belarus { fill: #f28e2b; }
.map-label { font: 12.200px Lato, sans-serif; letter-spacing: .4px; fill: #222; }
.attrib { position: absolute; left: 2px; bottom: 0; padding: 0 3px; background: #fafafa; font: 11px/15px "Liberation Sans", sans-serif; color: #555; }
.attrib.short { left: 1px; bottom: 0; padding: 0 2px; background: none; font-size: 10px; }
.unknown { position: absolute; right: 5px; bottom: 4px; width: 85px; height: 19px; border-radius: 3px; background: #b2b2b2; color: #fff; font-size: 13px; font-weight: bold; letter-spacing: .6px; line-height: 19px; text-align: center; }
.legend-title { font-size: 12.500px; color: #333; line-height: 15px; }
.ramp-row { display: flex; align-items: center; gap: 4px; margin-top: 6px; font-size: 13px; color: #555; height: 18px; }
.ramp-min { width: 11px; text-align: right; }
.ramp { width: 321px; height: 18px; border: 1px solid #9a9a9a; background: linear-gradient(90deg, #bde5da 0%, #93cbc9 28%, #4ba3bd 52%, #3b86a9 70%, #335b85 100%); }
.legend-title.country { margin-top: 10px; }
.country-grid { display: grid; grid-template-columns: 120px 120px 120px; grid-auto-rows: 20px; margin: 2px 0 0 4px; font-size: 12.500px; letter-spacing: .3px; color: #666; }
.lg { display: flex; align-items: center; gap: 5px; white-space: nowrap; }
.sw { width: 13px; height: 13px; flex: none; border: 1px solid #6a6a6a; }
.s-arg { background: #6b8fb5; } .s-can { background: #79b370; } .s-ind { background: #6aaaa8; }
.s-mar { background: #b0d2ec; } .s-chi { background: #a3d993; } .s-mex { background: #9dc9c4; }
.s-bel { background: #f5a45a; } .s-cyp { background: #c2a855; } .s-rom { background: #e57676; }
.s-bra { background: #fdc996; } .s-els { background: #f1d67f; } .s-rus { background: #ffa8a6; }
.hscroll { width: 357px; height: 15px; margin-top: 20px; display: flex; align-items: center; background: #efefef; padding: 0 4px; }
.hscroll svg { flex: none; }
.hthumb { width: 192px; height: 15px; margin-left: 5px; background: #c9c9c9; }
.hscroll svg:last-child { margin-left: auto; }

.tabs { height: 29px; flex: none; display: grid; grid-template-columns: 131px 47px 143px 104px 112px 123px 104px 138px 57px 63px 71px 104px 74px 32px 32px 31px; background: #e9e9e9; border-top: 1px solid #d0d0d0; border-bottom: 1px solid #d0d0d0; font-size: 12.700px; color: #666; }
.tab { display: flex; align-items: center; gap: 2px; padding: 0 0 2px 5px; border-right: 1px solid #d0d0d0; white-space: nowrap; }
.tab.has-icon { padding-left: 7px; }
.tab.ds { padding-left: 8px; gap: 4px; }
.tab.clipped { padding-left: 1px; overflow: hidden; }
.tab.current { background: #fff; color: #333; font-weight: bold; font-size: 13px; padding-left: 7px; }
.tab.icon { padding: 0 0 0 8px; }

.statusbar { height: 21px; flex: none; display: flex; background: #ededed; }
.st-cell { flex: none; height: 100%; border-left: 1px solid #d6d6d6; }
.c1 { margin-left: 1000px; width: 126px; }
.c2, .c3 { width: 27px; }
.c4 { width: 47px; }
.st-nav { width: 71px; flex: none; padding-left: 9px; display: flex; align-items: center; gap: 8px; border-left: 1px solid #d6d6d6; }
.st-views { flex: 1; display: flex; align-items: center; padding-left: 7px; gap: 8px; border-left: 1px solid #d6d6d6; }

.taskbar { height: 40px; flex: none; display: flex; align-items: center; background: linear-gradient(90deg, #1a0a16, #120a0a 60%, #1e1414); color: #fff; }
.start { width: 48px; height: 100%; flex: none; background: #3a0b2e; display: flex; align-items: center; justify-content: center; }
.search { width: 344px; height: 100%; flex: none; background: #f2f2f2; display: flex; align-items: center; padding-left: 9px; }
.cortana { width: 22px; height: 22px; border: 3px solid #111; border-radius: 50%; flex: none; }
.search-text { margin-left: 9px; font: 14px "Noto Sans", sans-serif; color: #222; }
.mic { margin-left: auto; margin-right: 15px; }
.task-icons { display: flex; height: 100%; }
.task { width: 49px; height: 100%; flex: none; display: flex; align-items: center; justify-content: center; position: relative; }
.ti-edge { margin-left: 2px; }
.ti-folder::after, .ti-chrome::after, .ti-tableau::after { content: ""; position: absolute; left: 4px; right: 4px; bottom: 0; height: 2px; background: #e09ae0; }
.ti-grid { margin-left: -1px; }
.ti-tableau { background: #3d3d3d; width: 47px; }
.ti-tableau::after { left: 0; right: 0; }
.tb-tile { width: 24px; height: 24px; background: #f4f4f4; display: flex; align-items: center; justify-content: center; }
.tray { flex: 1; display: flex; align-items: center; position: relative; height: 100%; padding-left: 147px; }
.tr-caret { margin-left: 22px; }
.tr-batt { margin-left: 13px; }
.tr-sound { margin-left: 6px; }
.tr-wifi { margin-left: 6px; }
.eng { margin-left: 9px; font: 12px Roboto, sans-serif; }
.clock { margin-left: 10px; width: 66px; text-align: center; font: 12px/20px Roboto, sans-serif; }
.notify { position: relative; margin-left: 12px; }
.notify svg { display: block; }
.badge { position: absolute; right: -6px; bottom: -6px; width: 16px; height: 16px; border-radius: 50%; border: 1px solid #888; background: #222; font: 10.500px/14px Roboto, sans-serif; text-align: center; }
```
